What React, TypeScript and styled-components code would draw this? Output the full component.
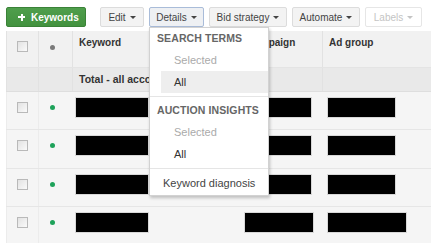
import styled, { createGlobalStyle } from "styled-components"

const GlobalStyle = createGlobalStyle`
  html, body {
    margin: 0;
    padding: 0;
    background: #ffffff;
    font-family: "Liberation Sans", Arial, sans-serif;
  }
`

type TRow = {
  keyword: number
  campaign: number
  adGroup: number
}

const rows: TRow[] = [
  { keyword: 72, campaign: 66, adGroup: 67 },
  { keyword: 72, campaign: 66, adGroup: 67 },
  { keyword: 72, campaign: 66, adGroup: 67 },
  { keyword: 72, campaign: 68, adGroup: 78 },
]

export default function App() {
  return (
    <Page>
      <GlobalStyle />
      <Toolbar>
        <AddButton>
          <Plus />
          Keywords
        </AddButton>
        <Buttons>
          <ToolButton $w={44}>Edit <Caret /></ToolButton>
          <MenuWrap>
            <ToolButton $w={55} $active>Details <Caret /></ToolButton>
            <Menu>
              <MenuHeader>SEARCH TERMS</MenuHeader>
              <MenuItem $muted>Selected</MenuItem>
              <MenuItem $hover>All</MenuItem>
              <Divider />
              <MenuHeader>AUCTION INSIGHTS</MenuHeader>
              <MenuItem $muted>Selected</MenuItem>
              <MenuItem>All</MenuItem>
              <Divider />
              <MenuPlain>Keyword diagnosis</MenuPlain>
            </Menu>
          </MenuWrap>
          <ToolButton $w={78}>Bid strategy <Caret /></ToolButton>
          <ToolButton $w={68}>Automate <Caret /></ToolButton>
          <ToolButton $w={57} $disabled>Labels <Caret /></ToolButton>
        </Buttons>
      </Toolbar>

      <Table>
        <colgroup>
          <col style={{ width: 32 }} />
          <col style={{ width: 34 }} />
          <col style={{ width: 168 }} />
          <col style={{ width: 82 }} />
          <col style={{ width: 130 }} />
        </colgroup>
        <thead>
          <HeadRow>
            <HeadCell><CheckBox $head /></HeadCell>
            <HeadCell><Dot $color="#7a7a7a" /></HeadCell>
            <HeadCell>Keyword</HeadCell>
            <HeadCell>Campaign</HeadCell>
            <HeadCell>Ad group</HeadCell>
          </HeadRow>
          <TotalRow>
            <TotalCell />
            <TotalCell />
            <TotalCell>Total - all accounts</TotalCell>
            <TotalCell />
            <TotalCell />
          </TotalRow>
        </thead>
        <tbody>
          {rows.map((r, i) => (
            <BodyRow key={i}>
              <BodyCell><CheckBox /></BodyCell>
              <BodyCell><Dot $color="#1ea25a" /></BodyCell>
              <BodyCell><Redact $w={r.keyword} $left={3} /></BodyCell>
              <BodyCell><Redact $w={r.campaign} $left={4} /></BodyCell>
              <BodyCell><Redact $w={r.adGroup} $left={5} /></BodyCell>
            </BodyRow>
          ))}
        </tbody>
      </Table>
    </Page>
  )
}

//styled components
const Page = styled.div`
  width: 431px;
  height: 243px;
  overflow: hidden;
  padding: 7px 0 0 6px;
  box-sizing: border-box;
`

const Toolbar = styled.div`
  display: flex;
  align-items: center;
  height: 20px;
`

const AddButton = styled.div`
  display: flex;
  align-items: center;
  gap: 6px;
  width: 80px;
  height: 20px;
  box-sizing: border-box;
  padding-left: 11px;
  background: linear-gradient(#4f9e4c, #43923f);
  border: 1px solid #3a8237;
  border-radius: 2px;
  color: #ffffff;
  font-size: 10px;
  font-weight: bold;
`

const Plus = styled.span`
  position: relative;
  width: 7px;
  height: 7px;

  &::before, &::after {
    content: "";
    position: absolute;
    background: #ffffff;
  }
  &::before { left: 0; top: 2.5px; width: 7px; height: 2px; }
  &::after { left: 2.5px; top: 0; width: 2px; height: 7px; }
`

const Buttons = styled.div`
  display: flex;
  gap: 5px;
  margin-left: 14px;
`

const ToolButton = styled.div<{ $w: number; $active?: boolean; $disabled?: boolean }>`
  display: flex;
  align-items: center;
  justify-content: center;
  gap: 4px;
  width: ${p => p.$w}px;
  height: 20px;
  box-sizing: border-box;
  border: 1px solid ${p => (p.$active ? "#a9bcd9" : p.$disabled ? "#e6e6e6" : "#dcdcdc")};
  border-radius: 2px;
  background: ${p => (p.$disabled ? "#ffffff" : p.$active ? "#eef0f3" : "#f3f3f3")};
  color: ${p => (p.$disabled ? "#c4c4c4" : "#444444")};
  font-size: 10px;
  white-space: nowrap;
`

const Caret = styled.span`
  width: 0;
  height: 0;
  border-left: 3px solid transparent;
  border-right: 3px solid transparent;
  border-top: 3px solid currentColor;
  margin-top: 1px;
`

const MenuWrap = styled.div`
  position: relative;
`

const Menu = styled.div`
  position: absolute;
  top: 20px;
  left: 0;
  z-index: 5;
  width: 120px;
  height: 169px;
  box-sizing: border-box;
  background: #ffffff;
  border: 1px solid #d2d2d2;
  box-shadow: 1px 2px 3px rgba(0, 0, 0, 0.22);
  display: flex;
  flex-direction: column;
`

const MenuHeader = styled.div`
  height: 21px;
  line-height: 21px;
  padding-left: 7px;
  color: #666666;
  font-size: 10.5px;
  font-weight: bold;
  letter-spacing: 0.1px;
  white-space: nowrap;
`

const MenuItem = styled.div<{ $muted?: boolean; $hover?: boolean }>`
  height: 22px;
  line-height: 22px;
  margin-left: 11px;
  padding-left: 13px;
  background: ${p => (p.$hover ? "#eeeeee" : "transparent")};
  color: ${p => (p.$muted ? "#aaaaaa" : "#333333")};
  font-size: 11px;
`

const Divider = styled.div`
  height: 1px;
  margin: 3px 0;
  background: #e5e5e5;
`

const MenuPlain = styled.div`
  height: 23px;
  line-height: 23px;
  padding-left: 13px;
  color: #444444;
  font-size: 11px;
`

const Table = styled.table`
  margin-top: 4px;
  width: 446px;
  table-layout: fixed;
  border-collapse: collapse;
`

const HeadRow = styled.tr`
  height: 36px;
  background: #f1f1f1;
`

const HeadCell = styled.th`
  padding: 6px 0 0 6px;
  vertical-align: top;
  text-align: left;
  border-left: 1px solid #e2e2e2;
  border-bottom: 1px solid #e4e4e4;
  color: #333333;
  font-size: 10px;
  font-weight: bold;
  white-space: nowrap;
  overflow: hidden;

  &:nth-child(1) { padding: 10px 0 0 10px; }
  &:nth-child(2) { padding: 14px 0 0 11px; }
`

const TotalRow = styled.tr`
  height: 24px;
  background: #e9e9e9;
`

const TotalCell = styled.td`
  padding: 0 0 0 6px;
  border-left: 1px solid #e2e2e2;
  border-bottom: 1px solid #dedede;
  color: #333333;
  font-size: 10.5px;
  font-weight: bold;
  white-space: nowrap;
  overflow: hidden;
`

const BodyRow = styled.tr`
  height: 38.5px;
  background: #f5f5f5;
`

const BodyCell = styled.td`
  padding: 6px 0 0 0;
  vertical-align: top;
  border-left: 1px solid #ececec;
  border-bottom: 1px solid #e6e6e6;

  &:nth-child(1) { padding: 10px 0 0 10px; }
  &:nth-child(2) { padding: 13px 0 0 11px; }
  &:nth-child(n + 3) { border-left-color: transparent; }
`

const CheckBox = styled.div<{ $head?: boolean }>`
  width: 9px;
  height: 9px;
  border: 1px solid #b9b9b9;
  background: linear-gradient(135deg, #e2e2e2, #fafafa);
`

const Dot = styled.div<{ $color: string }>`
  width: 5px;
  height: 5px;
  border-radius: 50%;
  background: ${p => p.$color};
`

const Redact = styled.div<{ $w: number; $left: number }>`
  width: ${p => p.$w}px;
  height: 19px;
  margin-left: ${p => p.$left}px;
  background: #000000;
  outline: 1px solid #d8d8d8;
`
